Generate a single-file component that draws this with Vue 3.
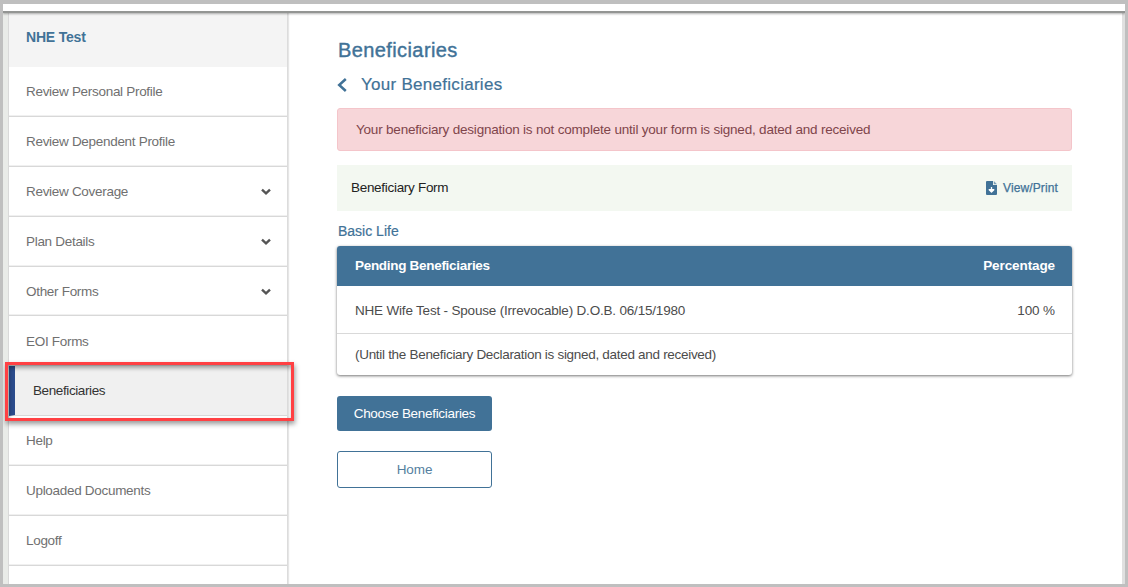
<script setup>
const items = [
  { label: 'Review Personal Profile' },
  { label: 'Review Dependent Profile' },
  { label: 'Review Coverage', sub: true },
  { label: 'Plan Details', sub: true },
  { label: 'Other Forms', sub: true },
  { label: 'EOI Forms' },
  { label: 'Beneficiaries', active: true },
  { label: 'Help' },
  { label: 'Uploaded Documents' },
  { label: 'Logoff' },
]
</script>

<template>
  <div class="frame">
    <div class="topbar"></div>
    <div class="body">
      <nav class="side">
        <div class="user"><span>NHE Test</span></div>
        <div v-for="i in items" :key="i.label" class="item" :class="{ active: i.active }">
          <span>{{ i.label }}</span>
          <svg v-if="i.sub" width="10" height="8" viewBox="0 0 10 8"><path d="M1 1.6 5 5.4 9 1.6" fill="none" stroke="#555" stroke-width="2.4" /></svg>
          <div v-if="i.active" class="highlight"></div>
        </div>
      </nav>
      <main>
        <h1><span>Beneficiaries</span></h1>
        <h2>
          <svg width="10" height="14" viewBox="0 0 10 14"><path d="M8.8 1 2.2 7 8.8 13" fill="none" stroke="#417297" stroke-width="2.5" /></svg>
          <span>Your Beneficiaries</span>
        </h2>
        <div class="alert"><span>Your beneficiary designation is not complete until your form is signed, dated and received</span></div>
        <div class="form">
          <span>Beneficiary Form</span>
          <a>
            <svg width="11" height="14" viewBox="0 0 11 14">
              <path d="M1 0H7V4H11V13Q11 14 10 14H1Q0 14 0 13V1Q0 0 1 0Z" fill="#417297" />
              <path d="M7.8 0 11 3.2H7.8Z" fill="#7d9fb7" />
              <path d="M5.5 6V9M3.2 8.7H7.8L5.5 11Z" fill="#fff" stroke="#fff" stroke-width="1.3" stroke-linejoin="round" />
            </svg>
            <span>View/Print</span>
          </a>
        </div>
        <h3><span>Basic Life</span></h3>
        <section class="table">
          <div class="row head"><span>Pending Beneficiaries</span><span class="pc">Percentage</span></div>
          <div class="row first"><span class="wife">NHE Wife Test - Spouse (Irrevocable) D.O.B. 06/15/1980</span><span class="pc">100 %</span></div>
          <div class="row last"><span>(Until the Beneficiary Declaration is signed, dated and received)</span></div>
        </section>
        <button class="primary">Choose Beneficiaries</button>
        <button class="outline">Home</button>
      </main>
    </div>
  </div>
</template>

<style>
body { background: #fff; overflow: hidden; }
</style>

<style scoped>
* { box-sizing: border-box; }
.frame {
  width: 1128px; height: 587px; overflow: hidden;
  display: flex; flex-direction: column;
  border: solid #bfbfbf; border-width: 4px 3px 3px;
  font-family: "Liberation Sans", Arial, sans-serif;
  font-size: 13.5px; letter-spacing: -0.3px; line-height: 18px; color: #707070;
  background: #fff;
}
.topbar { flex: none; height: 9px; border-bottom: 2px solid #939593; box-shadow: 0 1px 2px rgba(0,0,0,.3); z-index: 1; }
.body { flex: 1; min-height: 0; display: flex; border-left: 5px solid #e9ebe8; border-right: 3px solid #e0e0e0; }
.side { flex: none; width: 280px; border-left: 1px solid #d9d9d9; border-right: 1px solid #dcdcdc; box-shadow: 1px 0 1px #e6e6e6; }
.user { height: 54px; padding: 16px 0 0 17px; background: #f4f4f4; color: #417297; font-weight: bold; font-size: 14px; letter-spacing: -0.2px; line-height: 17px; }
.item {
  position: relative; height: 49.9px; padding: 1.4px 16px 0 17px;
  display: flex; align-items: center; justify-content: space-between;
  border-bottom: 1px solid #d8d8d8; box-shadow: inset 0 -1px #f0f0f0;
}
.active { background: #f0f0f0; border-left: 6px solid #2b4c8c; padding-left: 18px; color: #333; letter-spacing: -0.4px; }
.highlight {
  position: absolute; left: -10px; top: -4px; width: 289px; height: 59px;
  border: 3px solid #ff4043; box-shadow: 1px 3px 5px rgba(0,0,0,.4), inset 1px 3px 4px rgba(0,0,0,.35); z-index: 3;
}
main { width: 735px; margin-left: 49px; padding-top: 24px; display: flex; flex-direction: column; align-items: stretch; }
h1, h2, h3 { margin: 0; color: #417297; font-weight: normal; }
h1 { height: 26px; font-size: 20px; line-height: 26px; letter-spacing: 0.4px; -webkit-text-stroke: .4px #417297; padding-left: 1px; }
h2 { height: 22px; margin-top: 11px; display: flex; align-items: center; gap: 14px; font-size: 17px; line-height: 22px; letter-spacing: 0.28px; -webkit-text-stroke: .2px #417297; }
.alert { height: 43px; margin-top: 12px; padding: 0 18px; display: flex; align-items: center; background: #f7d6d9; border: 1px solid #f4c5ca; border-radius: 3px; color: #7f454b; letter-spacing: -.2px; }
.form { height: 46px; margin-top: 14px; padding: 0 14px; display: flex; align-items: center; justify-content: space-between; background: #f3f8f1; color: #222; }
a { display: flex; align-items: center; gap: 6px; color: #417297; font-size: 12px; letter-spacing: .12px; -webkit-text-stroke: .25px #417297; }
h3 { height: 18px; margin-top: 11px; padding-left: 1px; font-size: 14px; line-height: 18px; letter-spacing: 0; -webkit-text-stroke: .2px #417297; }
.table { height: 129px; margin-top: 6px; border-radius: 3px; overflow: hidden; box-shadow: 0 1px 3px rgba(0,0,0,.55); color: #4c4c4c; }
.row { display: flex; align-items: center; justify-content: space-between; padding: 0 17px 0 18px; }
.head { height: 40px; background: #417297; color: #fff; font-weight: bold; }
.first { height: 48px; padding-top: 2px; border-bottom: 1px solid #d9d9d9; }
.wife { letter-spacing: -.19px; }
.pc { letter-spacing: -.1px; }
.last { height: 41px; padding-top: 1px; }
button { width: 155px; border-radius: 3px; font: inherit; letter-spacing: inherit; padding: 0; }
.primary { height: 35px; margin-top: 21px; border: 0; background: #417297; color: #fff; }
.outline { height: 37px; margin-top: 20px; border: 1px solid #417297; background: #fff; color: #557f9f; letter-spacing: -.1px; }
</style>
